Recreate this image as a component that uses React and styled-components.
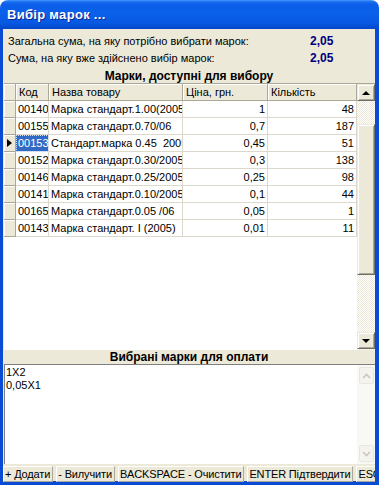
import styled, { createGlobalStyle } from 'styled-components'

const GlobalStyle = createGlobalStyle`
	html, body {
		margin: 0;
		padding: 0;
		background: #ffffff;
	}
	body {
		font-family: 'Liberation Sans', Arial, sans-serif;
		font-size: 11px;
		color: #000;
	}
`

const FACE = '#ECE9D8'
const SHADOW = '#ACA899'
const DARK = '#716F64'
const FRAME = '#0A4BD6'

const Window = styled.div`
	width: 379px;
	height: 485px;
	display: flex;
	flex-direction: column;
	border-radius: 8px 8px 0 0;
	overflow: hidden;
`

const TitleBar = styled.div`
	height: 29px;
	flex: none;
	display: flex;
	align-items: center;
	padding-left: 7px;
	background: linear-gradient(
		to bottom,
		#4a9bff 0%,
		#1c6ff0 6%,
		#0a5ee8 16%,
		#0b61ea 45%,
		#0758e2 80%,
		#0446c6 100%
	);
`

const Title = styled.span`
	font-size: 13px;
	font-weight: bold;
	color: #fff;
	text-shadow: 1px 1px 0 #0b2b8f;
	letter-spacing: 0.3px;
`

const Body = styled.div`
	flex: 1;
	display: flex;
	flex-direction: column;
	background: ${FACE};
	border-left: 3px solid ${FRAME};
	border-right: 4px solid ${FRAME};
	border-bottom: 4px solid ${FRAME};
	min-height: 0;
`

const Info = styled.div`
	padding: 3px 0 2px 5px;
`

const InfoRow = styled.div`
	height: 17px;
	display: flex;
	align-items: center;
`

const InfoLabel = styled.span`
	width: 302px;
	flex: none;
`

const InfoValue = styled.span`
	font-size: 12px;
	font-weight: bold;
	color: #000080;
`

const SectionTitle = styled.div`
	height: ${(p) => p.h}px;
	flex: none;
	display: flex;
	align-items: center;
	justify-content: center;
	font-size: 12px;
	font-weight: bold;
`

const GridBox = styled.div`
	height: 266px;
	flex: none;
	margin-left: 1px;
	display: flex;
	background: #fff;
	border-top: 1px solid ${SHADOW};
`

const Table = styled.div`
	flex: 1;
	overflow: hidden;
`

const cols = '12px 33px 134px 85px 89px'

const Row = styled.div`
	display: grid;
	grid-template-columns: ${cols};
	height: 17px;
`

const HeadCell = styled.div`
	background: ${FACE};
	border-right: 1px solid ${SHADOW};
	border-bottom: 1px solid ${SHADOW};
	box-shadow: inset 1px 1px 0 #fff;
	padding-left: 3px;
	display: flex;
	align-items: center;
	white-space: nowrap;
	overflow: hidden;
`

const Indicator = styled.div`
	background: ${FACE};
	border-right: 1px solid ${SHADOW};
	border-bottom: 1px solid ${SHADOW};
	box-shadow: inset 1px 1px 0 #fff;
	display: flex;
	align-items: center;
	justify-content: center;
`

const Pointer = styled.span`
	width: 0;
	height: 0;
	border-top: 4px solid transparent;
	border-bottom: 4px solid transparent;
	border-left: 5px solid #000;
	margin-left: -1px;
`

const Cell = styled.div`
	border-right: 1px solid #dcd9cc;
	border-bottom: 1px solid #dcd9cc;
	padding: 0 ${(p) => (p.num ? '2px' : '0')} 0 ${(p) => (p.num ? '0' : '2px')};
	display: flex;
	align-items: center;
	justify-content: ${(p) => (p.num ? 'flex-end' : 'flex-start')};
	white-space: pre;
	overflow: hidden;
	font-size: 11px;
	background: ${(p) => (p.sel ? '#316AC5' : '#fff')};
	color: ${(p) => (p.sel ? '#fff' : '#000')};
	outline: ${(p) => (p.sel ? '1px dotted #d8e2f6' : 'none')};
	outline-offset: -1px;
`

const ScrollBar = styled.div`
	width: 18px;
	flex: none;
	display: flex;
	flex-direction: column;
	background: repeating-conic-gradient(${FACE} 0% 25%, #fff 0% 50%) 0 0 / 2px 2px;
`

const ScrollButton = styled.div`
	height: 17px;
	flex: none;
	box-sizing: border-box;
	background: ${FACE};
	border: 1px solid;
	border-color: ${FACE} ${DARK} ${DARK} ${FACE};
	box-shadow: inset 1px 1px 0 #fff, inset -1px -1px 0 ${SHADOW};
	display: flex;
	align-items: center;
	justify-content: center;
`

const Arrow = styled.span`
	width: 0;
	height: 0;
	border-left: 4px solid transparent;
	border-right: 4px solid transparent;
	${(p) => (p.down ? 'border-top: 4px solid #000;' : 'border-bottom: 4px solid #000;')}
`

const Spacer = styled.div`
	height: ${(p) => (p.h ? `${p.h}px` : 'auto')};
	flex: ${(p) => (p.h ? 'none' : '1')};
`

const Thumb = styled(ScrollButton)`
	height: 151px;
`

const Memo = styled.div`
	height: 100px;
	flex: none;
	margin-left: 1px;
	display: flex;
	background: #fff;
	box-sizing: border-box;
	border-top: 1px solid #808080;
	border-left: 1px solid #808080;
`

const MemoText = styled.div`
	flex: 1;
	padding: 1px 0 0 1px;
	font-size: 11px;
	line-height: 13px;
	white-space: pre;
`

const MemoScroll = styled.div`
	width: 18px;
	flex: none;
	display: flex;
	flex-direction: column;
	justify-content: space-between;
	padding: 2px 1px 2px 2px;
	box-sizing: border-box;
	background: #f8f8f4;
`

const MemoButton = styled.div`
	height: 15px;
	border: 1px solid #e8e7df;
	border-radius: 2px;
	background: #f4f3ee;
	display: flex;
	align-items: center;
	justify-content: center;
`

const ButtonBar = styled.div`
	height: 16px;
	flex: none;
	margin-top: 2px;
	display: flex;
	gap: 3px;
	overflow: hidden;
`

const BarButton = styled.div`
	flex: none;
	box-sizing: border-box;
	border: 1px solid;
	border-color: #fff ${SHADOW} ${SHADOW} #fff;
	padding: 0 2px 0 1px;
	display: flex;
	align-items: center;
	white-space: nowrap;
	font-size: 11px;
	letter-spacing: -0.15px;
`

const Chevron = ({ down }) => (
	<svg width="9" height="6" viewBox="0 0 9 6">
		<path
			d={down ? 'M1 1 L4.5 4.5 L8 1' : 'M1 5 L4.5 1.5 L8 5'}
			fill="none"
			stroke="#c9c7be"
			strokeWidth="1.6"
		/>
	</svg>
)

const stamps = [
	['00140', 'Марка стандарт.1.00(2005)', '1', '48'],
	['00155', 'Марка стандарт.0.70/06', '0,7', '187'],
	['00153', 'Стандарт.марка 0.45  2005', '0,45', '51'],
	['00152', 'Марка стандарт.0.30/2005', '0,3', '138'],
	['00146', 'Марка стандарт.0.25/2005', '0,25', '98'],
	['00141', 'Марка стандарт.0.10/2005', '0,1', '44'],
	['00165', 'Марка стандарт.0.05 /06', '0,05', '1'],
	['00143', 'Марка стандарт. І (2005)', '0,01', '11'],
]

const selected = 2

const buttons = ['+ Додати', '- Вилучити', 'BACKSPACE - Очистити', 'ENTER Підтвердити', 'ESC']

export default function App() {
	return (
		<>
			<GlobalStyle />
			<Window>
				<TitleBar>
					<Title>Вибір марок ...</Title>
				</TitleBar>
				<Body>
					<Info>
						<InfoRow>
							<InfoLabel>Загальна сума, на яку потрібно вибрати марок:</InfoLabel>
							<InfoValue>2,05</InfoValue>
						</InfoRow>
						<InfoRow>
							<InfoLabel>Сума, на яку вже здійснено вибір марок:</InfoLabel>
							<InfoValue>2,05</InfoValue>
						</InfoRow>
					</Info>
					<SectionTitle h={15}>Марки, доступні для вибору</SectionTitle>
					<GridBox>
						<Table>
							<Row>
								<Indicator />
								<HeadCell>Код</HeadCell>
								<HeadCell>Назва товару</HeadCell>
								<HeadCell>Ціна, грн.</HeadCell>
								<HeadCell>Кількість</HeadCell>
							</Row>
							{stamps.map((s, i) => (
								<Row key={s[0]}>
									<Indicator>{i === selected && <Pointer />}</Indicator>
									<Cell sel={i === selected}>{s[0]}</Cell>
									<Cell>{s[1]}</Cell>
									<Cell num>{s[2]}</Cell>
									<Cell num>{s[3]}</Cell>
								</Row>
							))}
						</Table>
						<ScrollBar>
							<ScrollButton>
								<Arrow />
							</ScrollButton>
							<Spacer h={23} />
							<Thumb />
							<Spacer />
							<ScrollButton>
								<Arrow down />
							</ScrollButton>
							<Spacer h={1} />
						</ScrollBar>
					</GridBox>
					<SectionTitle h={14}>Вибрані марки для оплати</SectionTitle>
					<Memo>
						<MemoText>{'1X2\n0,05X1'}</MemoText>
						<MemoScroll>
							<MemoButton>
								<Chevron />
							</MemoButton>
							<MemoButton>
								<Chevron down />
							</MemoButton>
						</MemoScroll>
					</Memo>
					<ButtonBar>
						{buttons.map((label) => (
							<BarButton key={label}>{label}</BarButton>
						))}
					</ButtonBar>
				</Body>
			</Window>
		</>
	)
}
